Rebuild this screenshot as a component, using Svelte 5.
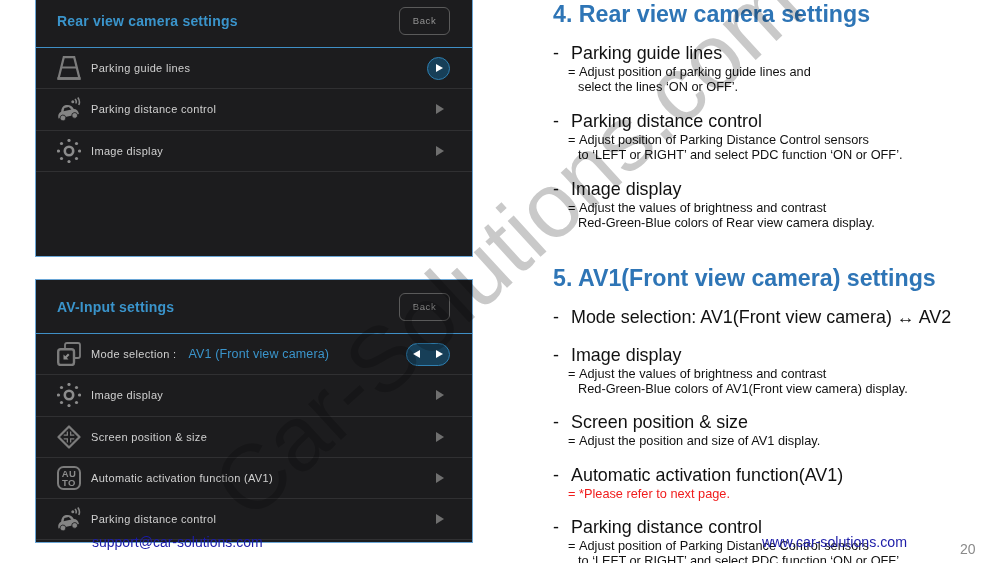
<script>
  const rearRows = [
    { icon: "road", label: "Parking guide lines", active: true },
    { icon: "car", label: "Parking distance control" },
    { icon: "sun", label: "Image display" },
  ];
  const avRows = [
    { icon: "mode", label: "Mode selection :", value: "AV1 (Front view camera)", toggle: true },
    { icon: "sun", label: "Image display" },
    { icon: "screen", label: "Screen position & size" },
    { icon: "auto", label: "Automatic activation function (AV1)" },
    { icon: "car", label: "Parking distance control" },
  ];
  const rearDocs = [
    { title: "Parking guide lines", lines: ["Adjust position of parking guide lines and", "select the lines ‘ON or OFF’."] },
    { title: "Parking distance control", lines: ["Adjust position of Parking Distance Control sensors", "to ‘LEFT or RIGHT’ and select PDC function ‘ON or OFF’."] },
    { title: "Image display", lines: ["Adjust the values of brightness and contrast", "Red-Green-Blue colors of Rear view camera display."] },
  ];
  const avDocs = [
    { title: "Mode selection: AV1(Front view camera) ↔ AV2", lines: [] },
    { title: "Image display", lines: ["Adjust the values of brightness and contrast", "Red-Green-Blue colors of AV1(Front view camera) display."] },
    { title: "Screen position & size", lines: ["Adjust the position and size of AV1 display."] },
    { title: "Automatic activation function(AV1)", lines: ["*Please refer to next page."], red: true },
    { title: "Parking distance control", lines: ["Adjust position of Parking Distance Control sensors", "to ‘LEFT or RIGHT’ and select PDC function ‘ON or OFF’."] },
  ];
</script>

{#snippet icon(name)}
  <svg class="icon" viewBox="0 0 24 24" aria-hidden="true">
    {#if name === "road"}
      <path d="M1.500 22.500 L6.800 1.200 H17.200 L22.500 22.500 Z" fill="none" stroke="#7c7c7c" stroke-width="2.200" />
      <path d="M4.500 11.500 H19.500" stroke="#7c7c7c" stroke-width="2" />
      <path d="M0.500 22.500 H23.500" stroke="#7c7c7c" stroke-width="2.800" />
    {:else if name === "car"}
      <g transform="rotate(-12 10 16)">
        <path d="M0.500 19.500 C0.500 16 2 14 4.500 13.500 C5.500 10 7.500 8 10.500 8 C14 8 16.500 10 17.500 13.500 C20 14 21.500 16 21.500 19.500 Z" fill="#858585" />
        <path d="M8.500 10.500 H13 L15 13.500 H7 Z" fill="#1c1c1e" />
        <circle cx="5" cy="20" r="2.900" fill="#858585" stroke="#1c1c1e" stroke-width="0.800" />
        <circle cx="17" cy="20" r="2.900" fill="#858585" stroke="#1c1c1e" stroke-width="0.800" />
      </g>
      <circle cx="15.800" cy="4.800" r="1.500" fill="#858585" />
      <path d="M18.800 6.500 A3.800 3.800 0 0 0 18 2 M21.800 8 A7.500 7.500 0 0 0 20.800 0.500" fill="none" stroke="#858585" stroke-width="1.600" />
    {:else if name === "sun"}
      <circle cx="12" cy="12" r="4.200" fill="none" stroke="#8c8c8c" stroke-width="2.600" />
      <g fill="#8c8c8c">
        <circle cx="12" cy="1.500" r="1.600" /><circle cx="12" cy="22.500" r="1.600" /><circle cx="1.500" cy="12" r="1.600" /><circle cx="22.500" cy="12" r="1.600" />
        <circle cx="4.500" cy="4.500" r="1.600" /><circle cx="19.500" cy="4.500" r="1.600" /><circle cx="4.500" cy="19.500" r="1.600" /><circle cx="19.500" cy="19.500" r="1.600" />
      </g>
    {:else if name === "mode"}
      <path d="M8 7 V3 Q8 1 10 1 H21 Q23 1 23 3 V14 Q23 16 21 16 H17" fill="none" stroke="#7c7c7c" stroke-width="1.800" />
      <rect x="1.200" y="7.200" width="15.800" height="15.800" rx="2.500" fill="none" stroke="#7c7c7c" stroke-width="2.400" />
      <path d="M6.500 17.500 V12.500 L8.300 14.300 L11 11.500 L12.500 13 L9.800 15.700 L11.500 17.500 Z" fill="#8c8c8c" />
    {:else if name === "screen"}
      <path d="M12 1.500 L22.500 12 L12 22.500 L1.500 12 Z" fill="none" stroke="#7c7c7c" stroke-width="2.200" stroke-linejoin="round" />
      <g fill="#7c7c7c">
        <path d="M11 6.500 V10.800 H6.700 V9.500 H9.700 V6.500 Z" />
        <path d="M13 6.500 V10.800 H17.300 V9.500 H14.300 V6.500 Z" />
        <path d="M11 17.500 V13.200 H6.700 V14.500 H9.700 V17.500 Z" />
        <path d="M13 17.500 V13.200 H17.300 V14.500 H14.300 V17.500 Z" />
      </g>
    {:else if name === "auto"}
      <rect x="1" y="1" width="22" height="22" rx="5.500" fill="none" stroke="#7c7c7c" stroke-width="2" />
      <text x="12" y="11" class="auto-text">AU</text>
      <text x="12" y="20" class="auto-text">TO</text>
    {/if}
  </svg>
{/snippet}

{#snippet menuRow(row)}
  <li class="row">
    {@render icon(row.icon)}
    <span class="row-label">{row.label}</span>
    {#if row.value}<span class="row-value">{row.value}</span>{/if}
    <span class="row-end">
      {#if row.toggle}
        <span class="pill"><i class="tri left"></i><i class="tri on"></i></span>
      {:else if row.active}
        <span class="round"><i class="tri on"></i></span>
      {:else}
        <i class="tri"></i>
      {/if}
    </span>
  </li>
{/snippet}

{#snippet docs(items)}
  {#each items as item}
    <div class="doc">
      <div class="doc-title"><span class="dash">-</span>{item.title}</div>
      {#each item.lines as line, i}
        <div class="doc-line" class:red={item.red}>
          {#if i === 0}<span class="eq">=</span>{/if}{line}
        </div>
      {/each}
    </div>
  {/each}
{/snippet}

<main class="slide">
  <div class="panels">
    <section class="panel rear">
      <header class="panel-head">
        <h2>Rear view camera settings</h2>
        <span class="back">Back</span>
      </header>
      <ul>
        {#each rearRows as row}{@render menuRow(row)}{/each}
      </ul>
    </section>
    <section class="panel av">
      <header class="panel-head">
        <h2>AV-Input settings</h2>
        <span class="back">Back</span>
      </header>
      <ul>
        {#each avRows as row}{@render menuRow(row)}{/each}
      </ul>
    </section>
  </div>

  <div class="notes">
    <h1>4. Rear view camera settings</h1>
    <div class="rear-docs">{@render docs(rearDocs)}</div>
    <h1 class="second">5. AV1(Front view camera) settings</h1>
    {@render docs(avDocs)}
  </div>

  <div class="watermark">Car-Solutions.com</div>
  <a class="foot support">support@car-solutions.com</a>
  <a class="foot site">www.car-solutions.com</a>
  <span class="page-no">20</span>
</main>

<style>
  :global(body) {
    margin: 0;
    background: #fff;
  }
  .slide {
    position: relative;
    width: 1000px;
    height: 563px;
    overflow: hidden;
    display: flex;
    background: #fff;
    font-family: "Liberation Sans", Arial, sans-serif;
  }
  .panels {
    width: 438px;
    margin-left: 35px;
    flex: none;
    display: flex;
    flex-direction: column;
    gap: 22px;
  }
  .panel {
    background: #1c1c1e;
    border: 1px solid #6aa6d6;
    box-sizing: border-box;
  }
  .rear {
    height: 257px;
    border-top: 0;
  }
  .av {
    height: 264px;
  }
  .panel-head {
    display: flex;
    align-items: center;
    justify-content: space-between;
    height: 48px;
    padding: 0 22px 6px 21px;
    box-sizing: border-box;
    border-bottom: 1px solid #3f8fc6;
  }
  .av .panel-head {
    height: 54px;
    padding-bottom: 0;
  }
  .panel-head h2 {
    margin: 0;
    font-size: 14px;
    font-weight: 700;
    letter-spacing: 0.19px;
    color: #3a94cb;
  }
  .back {
    box-sizing: border-box;
    width: 51px;
    height: 28px;
    display: flex;
    align-items: center;
    justify-content: center;
    border: 1px solid #5a5a5a;
    border-radius: 6px;
    font-size: 9.500px;
    letter-spacing: 0.6px;
    color: #929292;
  }
  ul {
    list-style: none;
    margin: 0;
    padding: 0;
  }
  .row {
    box-sizing: border-box;
    height: 41.250px;
    display: flex;
    align-items: center;
    padding: 0 22px 0 21px;
    border-bottom: 1px solid #303032;
    color: #d0d0d0;
  }
  .icon {
    width: 24px;
    height: 24px;
    flex: none;
    margin-right: 10px;
  }
  .auto-text {
    font-size: 9.500px;
    font-weight: 700;
    letter-spacing: 0.5px;
    text-anchor: middle;
    fill: #8c8c8c;
  }
  .row-label {
    font-size: 11px;
    letter-spacing: 0.33px;
  }
  .row-value {
    margin-left: 12px;
    font-size: 12.500px;
    letter-spacing: 0.15px;
    color: #3a94cb;
  }
  .row-end {
    margin-left: auto;
    display: flex;
    align-items: center;
    justify-content: flex-end;
  }
  .tri {
    display: block;
    width: 0;
    height: 0;
    margin-right: 6px;
    border-left: 8px solid #6f6f6f;
    border-top: 5px solid transparent;
    border-bottom: 5px solid transparent;
  }
  .tri.on {
    margin: 0;
    border-left: 7px solid #fff;
    border-top-width: 4.500px;
    border-bottom-width: 4.500px;
  }
  .tri.left {
    margin: 0;
    border-left: 0;
    border-right: 7px solid #fff;
    border-top-width: 4.500px;
    border-bottom-width: 4.500px;
  }
  .round,
  .pill {
    box-sizing: border-box;
    height: 23px;
    display: flex;
    align-items: center;
    justify-content: center;
    background: #173f58;
    border: 1px solid #2f7fb0;
    border-radius: 12px;
  }
  .round {
    width: 23px;
    padding-left: 2px;
  }
  .pill {
    width: 44px;
    justify-content: space-between;
    padding: 0 6px;
  }
  .notes {
    margin-left: 80px;
    color: #111;
  }
  h1 {
    margin: 0;
    font-size: 23.200px;
    line-height: 28px;
    font-weight: 700;
    color: #2e75b6;
  }
  .second {
    margin-top: 34px;
    margin-bottom: -1px;
  }
  .doc {
    margin-top: 15.500px;
  }
  .rear-docs {
    margin-top: -2.500px;
  }
  .rear-docs .doc {
    margin-top: 16px;
  }
  .doc-title {
    font-size: 17.900px;
    line-height: 22px;
    white-space: nowrap;
  }
  .dash {
    display: inline-block;
    width: 18px;
  }
  .doc-line {
    font-size: 12.750px;
    line-height: 15px;
    padding-left: 25px;
    white-space: nowrap;
  }
  .eq {
    display: inline-block;
    width: 0;
    margin-left: -10px;
    margin-right: 11px;
  }
  .red {
    color: #f01c1c;
  }
  .watermark {
    position: absolute;
    left: 228px;
    top: 440px;
    font-size: 92px;
    line-height: 120px;
    white-space: nowrap;
    color: #c9c9c9;
    mix-blend-mode: multiply;
    transform-origin: 0 50%;
    transform: rotate(-42.500deg);
    pointer-events: none;
  }
  .foot {
    position: absolute;
    font-size: 14px;
    line-height: 16px;
    color: #1c1ca8;
  }
  .support {
    left: 92px;
    top: 534px;
  }
  .site {
    left: 762px;
    top: 534px;
    font-size: 14.200px;
  }
  .page-no {
    position: absolute;
    left: 960px;
    top: 541px;
    font-size: 14px;
    line-height: 16px;
    color: #8a8a8a;
  }
</style>
